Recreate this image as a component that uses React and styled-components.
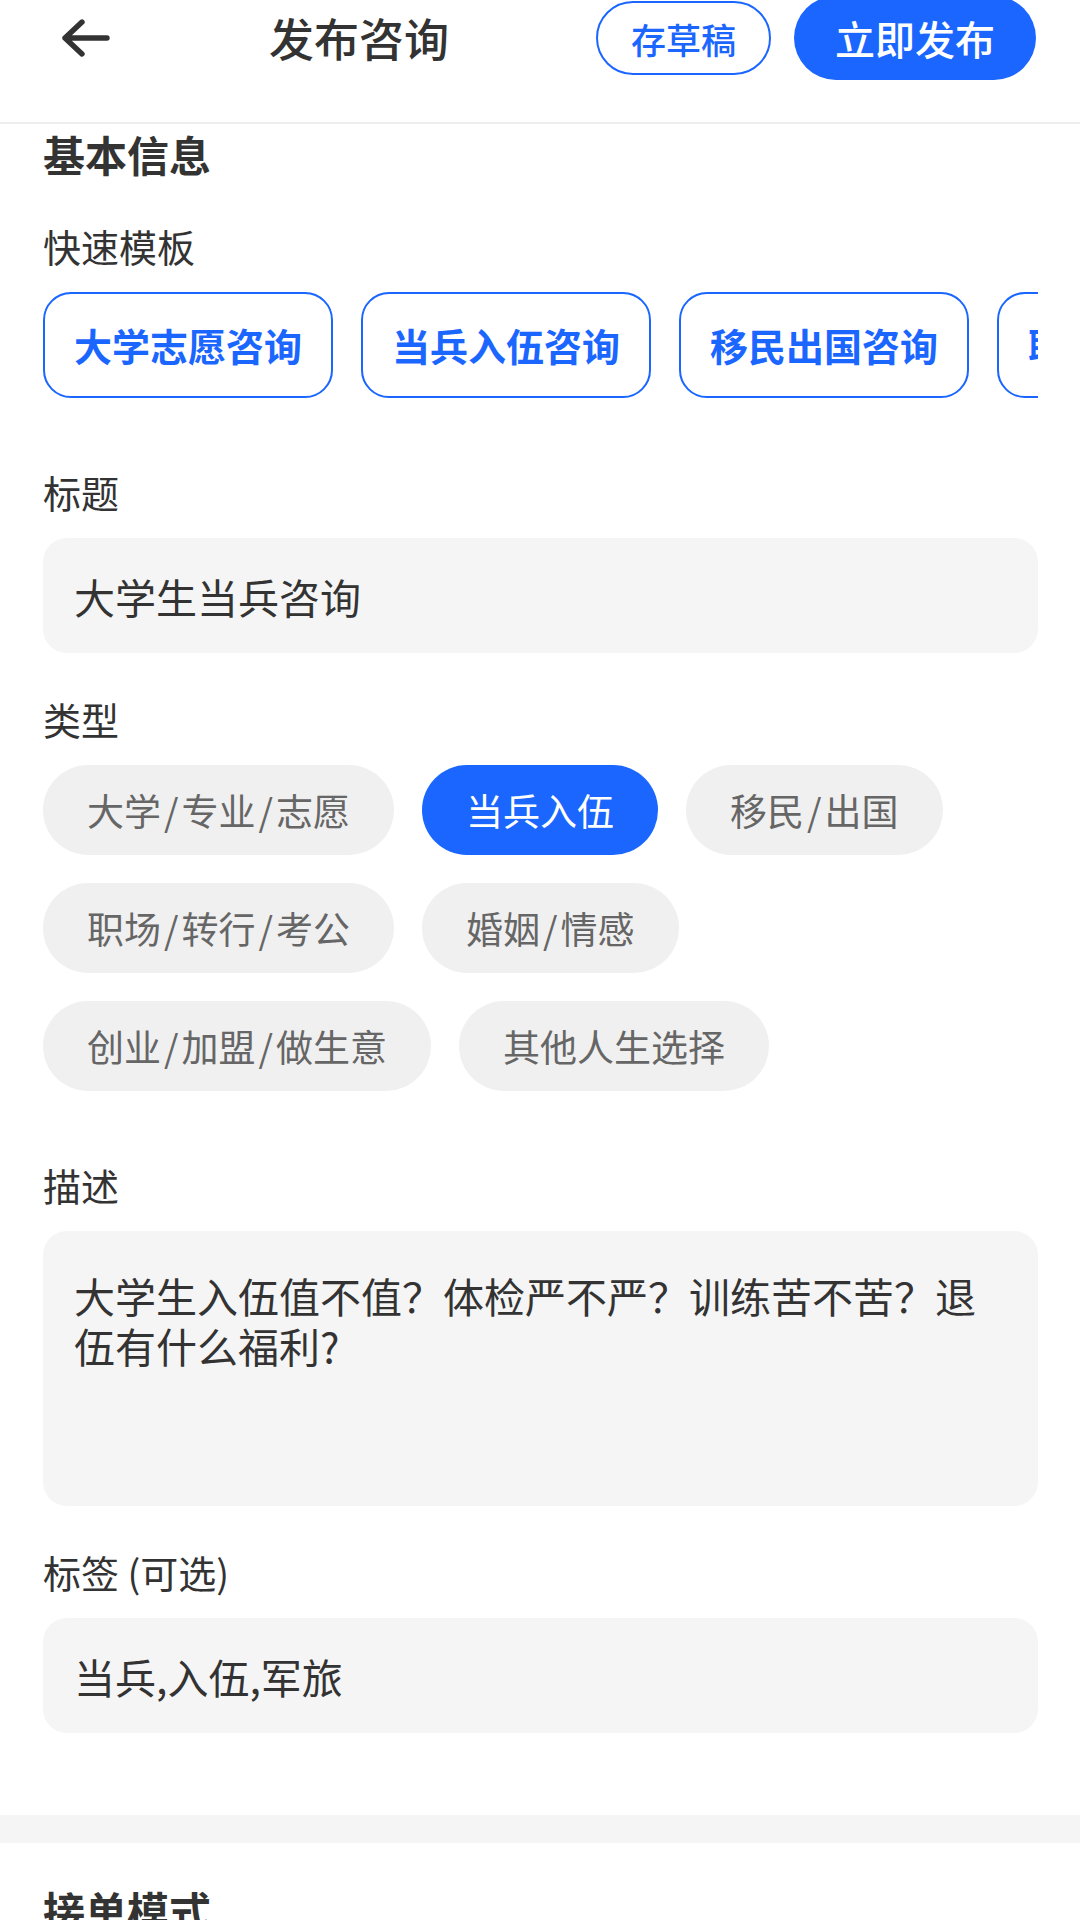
import React from 'react';
import styled, { createGlobalStyle } from 'styled-components';

const BLUE = '#1a66ff';

const GlobalStyle = createGlobalStyle`
  html, body {
    margin: 0;
    padding: 0;
    background: #fff;
  }
  body {
    font-family: "Noto Sans CJK SC", "Noto Sans", sans-serif;
    color: #333;
  }
  * { box-sizing: border-box; }
`;

const Page = styled.div`
  width: 1080px;
  min-height: 1920px;
  overflow: hidden;
  background: #fff;
`;

const Header = styled.header`
  height: 124px;
  padding: 0 44px 46px 60px;
  border-bottom: 2px solid #eeeeee;
`;

const HeaderRow = styled.div`
  height: 76px;
  display: flex;
  align-items: center;
`;

const BackButton = styled.button`
  width: 52px;
  height: 42px;
  padding: 0;
  border: none;
  background: none;
  display: flex;
  align-items: center;
  margin-right: 157px;
  color: #333;
`;

const Title = styled.h1`
  margin: 0 auto 0 0;
  font-size: 45px;
  font-weight: 500;
  line-height: 60px;
  color: #333;
`;

const DraftButton = styled.button`
  height: 74px;
  padding: 0 33px;
  border: 2.5px solid ${BLUE};
  border-radius: 37px;
  background: #fff;
  color: ${BLUE};
  font-family: inherit;
  font-size: 35px;
  font-weight: 500;
  line-height: 1;
  margin-right: 23px;
`;

const PublishButton = styled.button`
  height: 84px;
  padding: 0 41px;
  border: none;
  border-radius: 42px;
  background: ${BLUE};
  color: #fff;
  font-family: inherit;
  font-size: 40px;
  font-weight: 500;
  line-height: 1;
`;

const Content = styled.main`
  padding: 2px 42px 0 43px;
`;

const SectionTitle = styled.h2`
  margin: 0;
  font-size: 42px;
  line-height: 56px;
  font-weight: 700;
  color: #333;
`;

const Field = styled.section`
  margin-top: ${(p) => p.$gap}px;
`;

const Label = styled.div`
  font-size: 38px;
  line-height: 52px;
  color: #333;
  margin-bottom: 20px;
`;

const TemplateRow = styled.div`
  display: flex;
  gap: 28px;
  overflow: hidden;
  padding-bottom: 28px;
`;

const TemplateButton = styled.button`
  flex-shrink: 0;
  height: 106px;
  padding: 0 29px;
  border: 2.5px solid ${BLUE};
  border-radius: 28px;
  background: #fff;
  color: ${BLUE};
  font-family: inherit;
  font-size: 38px;
  font-weight: 700;
  line-height: 1;
`;

const InputBox = styled.div`
  height: ${(p) => (p.$tall ? 275 : 115)}px;
  padding: ${(p) => (p.$tall ? '39px 31px 0' : '0 31px')};
  display: flex;
  align-items: ${(p) => (p.$tall ? 'flex-start' : 'center')};
  background: #f5f5f5;
  border-radius: 24px;
  font-size: 41px;
  line-height: 50px;
  color: #333;
`;

const ChipWrap = styled.div`
  display: flex;
  flex-wrap: wrap;
  gap: 28px;
  padding-bottom: 28px;
`;

const Chip = styled.button`
  height: 90px;
  padding: 0 44px;
  border: none;
  border-radius: 45px;
  background: ${(p) => (p.$active ? BLUE : '#f0f0f0')};
  color: ${(p) => (p.$active ? '#fff' : '#666')};
  font-family: inherit;
  font-size: 37px;
  line-height: 1;
`;

const Slash = styled.span`
  margin: 0 3px;
`;

const Band = styled.div`
  height: 28px;
  background: #f5f5f5;
  margin: 82px -42px 0 -43px;
`;

const NextTitle = styled(SectionTitle)`
  margin-top: 39px;
`;

const BackIcon = () => (
  <svg width="52" height="42" viewBox="0 0 52 42" fill="none">
    <path
      d="M22 5 L5 21 L22 37 M5 21 H47"
      stroke="currentColor"
      strokeWidth="5.4"
      strokeLinecap="round"
      strokeLinejoin="round"
    />
  </svg>
);

const templates = ['大学志愿咨询', '当兵入伍咨询', '移民出国咨询', '职场转行咨询'];

const types = [
  ['大学', '专业', '志愿'],
  ['当兵入伍'],
  ['移民', '出国'],
  ['职场', '转行', '考公'],
  ['婚姻', '情感'],
  ['创业', '加盟', '做生意'],
  ['其他人生选择'],
];

const ChipText = ({ parts }) =>
  parts.map((part, i) => (
    <React.Fragment key={part}>
      {i > 0 && <Slash>/</Slash>}
      {part}
    </React.Fragment>
  ));

export default function App() {
  return (
    <Page>
      <GlobalStyle />
      <Header>
        <HeaderRow>
          <BackButton aria-label="返回">
            <BackIcon />
          </BackButton>
          <Title>发布咨询</Title>
          <DraftButton>存草稿</DraftButton>
          <PublishButton>立即发布</PublishButton>
        </HeaderRow>
      </Header>

      <Content>
        <SectionTitle>基本信息</SectionTitle>

        <Field $gap={38}>
          <Label>快速模板</Label>
          <TemplateRow>
            {templates.map((t) => (
              <TemplateButton key={t}>{t}</TemplateButton>
            ))}
          </TemplateRow>
        </Field>

        <Field $gap={40}>
          <Label>标题</Label>
          <InputBox>大学生当兵咨询</InputBox>
        </Field>

        <Field $gap={40}>
          <Label>类型</Label>
          <ChipWrap>
            {types.map((parts) => (
              <Chip key={parts.join('/')} $active={parts[0] === '当兵入伍'}>
                <ChipText parts={parts} />
              </Chip>
            ))}
          </ChipWrap>
        </Field>

        <Field $gap={40}>
          <Label>描述</Label>
          <InputBox $tall>
            大学生入伍值不值？体检严不严？训练苦不苦？退伍有什么福利?
          </InputBox>
        </Field>

        <Field $gap={40}>
          <Label>标签 (可选)</Label>
          <InputBox>当兵,入伍,军旅</InputBox>
        </Field>

        <Band />
        <NextTitle>接单模式</NextTitle>
      </Content>
    </Page>
  );
}
